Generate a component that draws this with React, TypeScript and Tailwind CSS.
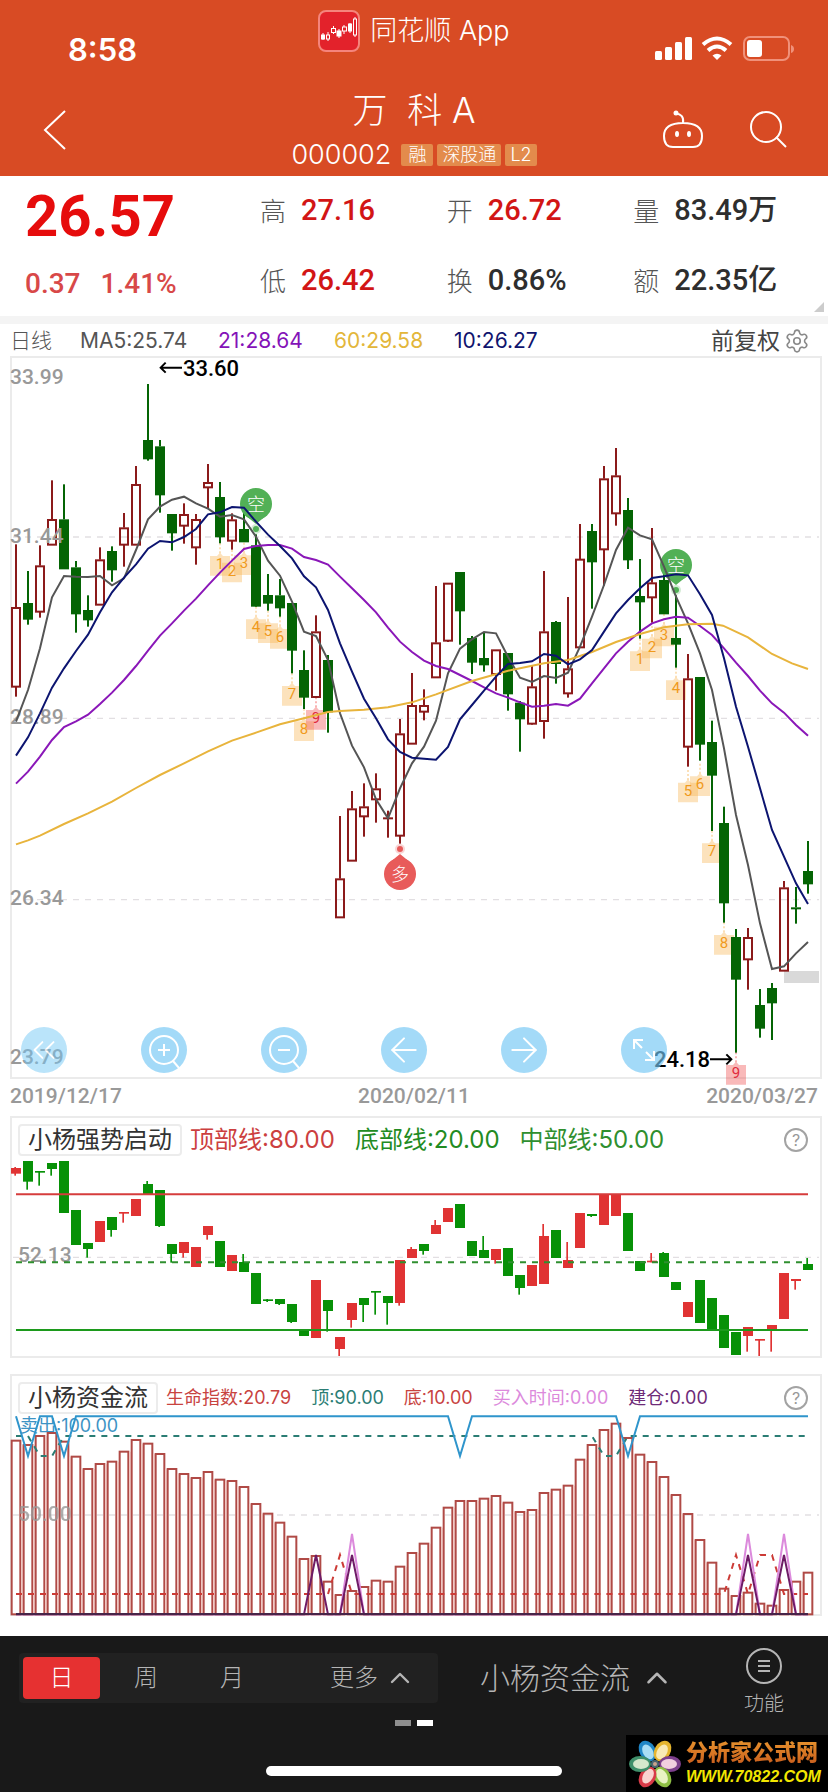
import type { ReactNode } from 'react'
import { ArrowLeft, ArrowRight, ChevronUp, ChevronsLeft, Settings } from 'lucide-react'
import clsx from 'clsx'

// ─── Series ───────────────────────────────────────────────────────────────────
// All series live on a fine grid: 3 units per panel pixel, 36 units per bar.

type Side = 'r' | 'g'
type Bar = [side: Side, high: number, top: number, bottom: number, low: number]
type Point = [x: number, y: number]

const barX = (i: number) => 48 + i * 36

const DAILY: Bar[] = [
  ['r', 583, 772, 1010, 1040], ['g', 663, 759, 807, 824], ['r', 586, 647, 785, 803], ['r', 391, 508, 584, 584],
  ['g', 403, 508, 656, 656], ['g', 633, 652, 791, 848], ['g', 736, 780, 809, 830], ['r', 592, 629, 764, 764],
  ['g', 589, 603, 659, 695], ['r', 489, 533, 584, 650], ['r', 348, 403, 584, 584], ['g', 102, 270, 326, 332],
  ['g', 270, 289, 434, 488], ['g', 492, 492, 548, 602], ['r', 460, 493, 527, 581], ['r', 492, 508, 592, 644],
  ['r', 342, 397, 412, 475], ['g', 396, 441, 560, 580], ['r', 490, 509, 572, 599], ['g', 487, 537, 575, 575],
  ['g', 553, 586, 768, 770], ['g', 672, 735, 759, 782], ['g', 687, 736, 773, 800], ['g', 759, 759, 900, 970],
  ['g', 901, 960, 1041, 1077], ['r', 796, 845, 1041, 1041], ['g', 915, 930, 1085, 1148], ['r', 1398, 1586, 1702, 1702],
  ['r', 1323, 1376, 1532, 1532], ['r', 1300, 1370, 1399, 1460], ['r', 1270, 1316, 1348, 1418], ['r', 1382, 1402, 1406, 1463],
  ['r', 1107, 1151, 1457, 1481], ['r', 969, 1066, 1181, 1181], ['r', 1018, 1066, 1085, 1111], ['r', 708, 878, 982, 982],
  ['r', 699, 699, 872, 876], ['g', 666, 666, 782, 884], ['g', 858, 864, 936, 972], ['g', 848, 924, 944, 965],
  ['r', 899, 899, 972, 1022], ['g', 909, 909, 1031, 1082], ['g', 1053, 1058, 1106, 1205], ['r', 947, 1010, 1121, 1124],
  ['r', 663, 845, 1113, 1166], ['g', 813, 816, 940, 1001], ['r', 741, 956, 1030, 1043], ['r', 522, 627, 892, 892],
  ['g', 522, 543, 635, 776], ['r', 348, 386, 598, 707], ['r', 294, 377, 490, 527], ['g', 444, 480, 629, 657],
  ['g', 627, 738, 755, 866], ['r', 534, 698, 742, 818], ['g', 660, 690, 791, 791], ['g', 736, 864, 882, 953],
  ['r', 912, 986, 1190, 1250], ['g', 981, 981, 1182, 1232], ['g', 1112, 1176, 1275, 1443], ['g', 1370, 1419, 1658, 1718],
  ['g', 1737, 1761, 1887, 2108], ['r', 1734, 1762, 1828, 1919], ['g', 1917, 1965, 2034, 2063], ['g', 1899, 1914, 1958, 2070],
  ['r', 1593, 1613, 1862, 1862], ['g', 1611, 1672, 1676, 1721], ['g', 1473, 1563, 1601, 1631],
]

const MA5 = [
  1115, 1020, 895, 742, 678, 680, 681, 678, 706, 685, 600, 508, 470, 449, 440, 460, 476, 500, 495, 508, 560, 632, 677, 755,
  845, 858, 930, 1090, 1187, 1252, 1348, 1405, 1315, 1240, 1190, 1112, 970, 896, 868, 846, 850, 920, 983, 996, 978, 984, 968,
  890, 800, 705, 600, 533, 556, 568, 650, 740, 820, 910, 1020, 1195, 1395, 1545, 1720, 1857, 1849, 1810, 1776,
]
const MA10 = [
  1217, 1162, 1090, 1013, 955, 903, 854, 787, 727, 683, 643, 596, 573, 577, 561, 537, 493, 487, 471, 473, 515, 554, 588, 625,
  679, 712, 780, 880, 965, 1046, 1105, 1168, 1206, 1223, 1226, 1229, 1191, 1108, 1065, 1022, 980, 942, 939, 934, 912, 917,
  943, 928, 900, 845, 790, 750, 715, 684, 679, 673, 676, 733, 795, 925, 1070, 1190, 1315, 1440, 1520, 1600, 1662,
]
const MA21 = [
  1301, 1265, 1220, 1170, 1131, 1114, 1094, 1062, 1028, 990, 948, 902, 857, 820, 782, 746, 706, 668, 632, 597, 588, 585, 585,
  596, 621, 630, 644, 680, 715, 750, 787, 833, 875, 906, 932, 948, 957, 975, 993, 1012, 1030, 1043, 1057, 1070, 1067, 1062,
  1067, 1046, 1000, 955, 910, 875, 845, 820, 808, 800, 803, 828, 855, 895, 938, 978, 1022, 1060, 1088, 1125, 1157,
]
const MA60: Point[] = [
  [48, 1483], [84, 1471], [120, 1457], [192, 1422], [264, 1390], [336, 1355], [408, 1314], [480, 1275], [552, 1240],
  [624, 1204], [696, 1172], [768, 1148], [840, 1123], [912, 1105], [984, 1086], [1020, 1083], [1092, 1079], [1164, 1072],
  [1236, 1057], [1308, 1033], [1416, 993], [1524, 962], [1632, 940], [1704, 930], [1776, 906], [1848, 876], [1920, 852],
  [1992, 832], [2064, 823], [2136, 821], [2169, 827], [2244, 862], [2316, 912], [2376, 940], [2424, 957],
]

// Sequence counters hanging below the bars: bar index, box top, digit
const COUNTERS: [bar: number, top: number, digit: number][] = [
  [17, 618, 1], [18, 638, 2], [19, 616, 3], [20, 808, 4], [21, 820, 5], [22, 837, 6], [23, 1008, 7], [24, 1114, 8], [25, 1080, 9],
  [52, 904, 1], [53, 866, 2], [54, 830, 3], [55, 991, 4], [56, 1298, 5], [57, 1279, 6], [58, 1480, 7], [59, 1755, 8], [60, 2145, 9],
]

const STRENGTH: Bar[] = [
  ['r', 201, 204, 221, 227], ['g', 183, 183, 245, 269], ['g', 213, 213, 218, 257], ['g', 189, 189, 207, 227],
  ['g', 183, 183, 339, 339], ['g', 330, 330, 435, 435], ['g', 429, 429, 447, 473], ['r', 363, 363, 426, 426],
  ['g', 351, 351, 390, 410], ['r', 336, 336, 341, 368], ['r', 297, 297, 348, 348], ['g', 243, 252, 282, 282],
  ['g', 270, 270, 378, 381], ['g', 432, 432, 462, 488], ['r', 426, 426, 459, 473], ['r', 441, 441, 501, 501],
  ['r', 378, 378, 405, 419], ['g', 423, 423, 501, 501], ['r', 465, 465, 513, 513], ['g', 462, 486, 516, 516],
  ['g', 519, 519, 612, 612], ['g', 597, 598, 603, 606], ['g', 597, 597, 612, 615], ['g', 612, 612, 666, 669],
  ['g', 693, 693, 708, 708], ['r', 540, 540, 714, 714], ['g', 600, 600, 633, 695], ['r', 711, 711, 747, 768],
  ['r', 609, 609, 660, 683], ['g', 594, 594, 615, 666], ['g', 573, 573, 578, 644], ['g', 588, 588, 609, 674],
  ['r', 480, 480, 609, 617], ['r', 441, 447, 474, 474], ['g', 432, 432, 453, 464], ['r', 360, 375, 402, 402],
  ['r', 324, 324, 366, 366], ['g', 312, 312, 384, 384], ['g', 423, 423, 468, 468], ['g', 408, 450, 474, 474],
  ['r', 447, 447, 480, 491], ['g', 444, 444, 528, 528], ['g', 525, 525, 564, 584], ['r', 495, 495, 558, 558],
  ['r', 372, 408, 552, 552], ['g', 390, 390, 474, 474], ['r', 426, 480, 504, 504], ['r', 339, 339, 444, 444],
  ['g', 342, 342, 348, 351], ['r', 283, 283, 375, 375], ['r', 283, 283, 348, 348], ['g', 339, 339, 453, 453],
  ['g', 483, 483, 513, 513], ['r', 459, 482, 487, 487], ['g', 456, 459, 531, 531], ['g', 546, 546, 570, 570],
  ['r', 606, 606, 651, 651], ['g', 540, 540, 669, 669], ['g', 594, 594, 690, 690], ['g', 645, 645, 744, 744],
  ['g', 696, 696, 765, 765], ['r', 681, 681, 708, 755], ['r', 717, 717, 722, 768], ['r', 675, 675, 690, 755],
  ['r', 519, 519, 657, 657], ['r', 537, 537, 543, 569], ['g', 474, 492, 510, 510],
]

const FLOW = [
  242, 255, 228, 219, 245, 290, 327, 312, 305, 275, 240, 251, 282, 327, 342, 354, 336, 359, 363, 381, 432, 461, 488, 530, 597,
  588, 665, 705, 693, 681, 662, 665, 620, 579, 551, 503, 443, 423, 423, 416, 408, 428, 456, 450, 399, 389, 377, 299, 255, 210,
  191, 234, 284, 306, 351, 405, 462, 540, 608, 686, 708, 698, 731, 737, 690, 665, 638,
]

const FLOW_BASE = 763

// Flat line that jumps to `peak` at the given bars
function spikes(base: number, peak: number, bars: number[]): string {
  return Array.from({ length: 67 }, (_, i) => `${barX(i)},${bars.includes(i) ? peak : base}`).join(' ')
}

const bySeries = (values: number[]) => values.map((v, i) => `${barX(i)},${v}`).join(' ')

// ─── Shared pieces ────────────────────────────────────────────────────────────

const AXIS = 'fill-[#999999] font-[Roboto] text-[21px] font-medium'

interface PanelProps {
  viewBox: string
  chart: ReactNode
  label: string
  children?: ReactNode
}

function Panel({ viewBox, chart, label, children }: PanelProps) {
  return (
    <section className="relative ml-2.5 mr-1.5 grid border-2 border-[#ebebeb]">
      <svg viewBox={viewBox} className="col-start-1 row-start-1 h-auto w-full overflow-visible" role="img" aria-label={label}>
        {chart}
      </svg>
      {children}
    </section>
  )
}

function Fine({ children }: { children: ReactNode }) {
  return <g transform="scale(0.333333)">{children}</g>
}

function GridLine({ y }: { y: number }) {
  return <line x1="39" x2="2457" y1={y} y2={y} stroke="#e2dfe2" strokeWidth="4" strokeDasharray="18 18" />
}

function Candle({ bar, i }: { bar: Bar; i: number }) {
  const [side, high, top, bottom, low] = bar
  const x = barX(i)
  const color = side === 'r' ? '#8b1a1a' : '#046404'
  return (
    <g stroke={color} strokeWidth="6">
      {high < top && <line x1={x} x2={x} y1={high} y2={top} />}
      {low > bottom && <line x1={x} x2={x} y1={bottom} y2={low} />}
      {side === 'r' && bottom - top > 6
        ? <rect x={x - 12} y={top + 2} width="24" height={bottom - top - 2} fill="none" />
        : <rect x={x - 15} y={top} width="30" height={bottom - top + 2} fill={color} stroke="none" />}
    </g>
  )
}

function Signal({ x, y, text, up }: { x: number; y: number; text: string; up?: boolean }) {
  const color = up ? '#e85b5a' : '#52b056'
  const d = up ? -1 : 1
  return (
    <g>
      <circle cx={x} cy={y} r="16" fill={color} />
      <path d={`M${x - 11} ${y + d * 11} L${x} ${y + d * 20} L${x + 11} ${y + d * 11}Z`} fill={color} />
      <circle cx={x} cy={y + d * 25} r="5" fill={color} fillOpacity="0.25" />
      <circle cx={x} cy={y + d * 25} r="3" fill={color} />
      <text x={x} y={y + 7} textAnchor="middle" className="fill-white text-[18px] font-light">{text}</text>
    </g>
  )
}

function HelpButton() {
  return (
    <button
      type="button"
      className="ml-auto flex size-6 shrink-0 items-center justify-center rounded-full border-2 border-[#a3a3a3] text-base leading-none text-[#999999]"
      aria-label="帮助"
    >
      ?
    </button>
  )
}

// ─── Header ───────────────────────────────────────────────────────────────────

function AppIcon() {
  return (
    <svg viewBox="0 0 42 42" className="size-[42px]" aria-hidden="true">
      <rect x="1" y="1" width="40" height="40" rx="7" fill="#e3222b" stroke="#f5847c" strokeWidth="2" />
      <g stroke="#fff" strokeWidth="1" fill="none">
        <path d="M5 23v7M10 22v9M15.500 16v8M21 19v9M26 15v9M32 13v10M37 7v20" />
        <rect x="3.500" y="25" width="3" height="4" fill="#fff" />
        <rect x="8.500" y="25" width="3" height="4" fill="#e3222b" />
        <rect x="13.500" y="18.500" width="4" height="4" fill="#e3222b" />
        <rect x="19" y="21" width="4" height="5" fill="#fff" />
        <rect x="24.500" y="17" width="4" height="4" fill="#e3222b" />
        <rect x="30.500" y="14" width="3" height="7" fill="#fff" />
        <rect x="35.500" y="9" width="3" height="16" fill="#e3222b" />
      </g>
    </svg>
  )
}

function StatusIcons() {
  return (
    <svg viewBox="0 0 142 26" className="h-[26px] w-[142px]" aria-hidden="true">
      <g fill="#fff">
        <rect x="1" y="15" width="7" height="9" rx="1.500" />
        <rect x="11" y="11" width="7" height="13" rx="1.500" />
        <rect x="21" y="6" width="7" height="18" rx="1.500" />
        <rect x="31" y="1" width="7" height="23" rx="1.500" />
        <path d="M58.500 19.500q4.500-3.500 9 0L63 24z" />
      </g>
      <g fill="none" stroke="#fff" strokeWidth="4">
        <path d="M49 8.500q14-12 28 0" />
        <path d="M54 14.500q9-8 18 0" />
      </g>
      <rect x="90" y="1" width="45" height="23" rx="6" fill="none" stroke="#f0917a" strokeWidth="2" />
      <path d="M137 9q3 1 3 4t-3 4z" fill="#f0917a" />
      <rect x="93" y="4" width="15" height="17" rx="3" fill="#fff" />
    </svg>
  )
}

const TAG = 'rounded-xs bg-[#e38b4c] text-[18px] font-light leading-[22px]'

function Header() {
  return (
    <header className="bg-[#d84b24] text-white">
      <div className="grid h-[82px] grid-cols-[1fr_auto_1fr] items-start">
        <time className="pl-[68px] pt-[30px] text-[31px] font-semibold leading-10">8:58</time>
        <div className="flex items-center gap-2.5 pt-2.5">
          <AppIcon />
          <span className="text-[27px] font-light leading-10">同花顺 App</span>
        </div>
        <div className="flex justify-end pr-8 pt-9">
          <StatusIcons />
        </div>
      </div>
      <div className="grid h-[94px] grid-cols-[1fr_auto_1fr] items-center">
        <button type="button" className="ml-6 w-16" aria-label="返回">
          <svg viewBox="0 0 64 44" className="h-11 w-16 fill-none stroke-white" strokeWidth="2" aria-hidden="true">
            <path d="M41 4L21 23L41 42" />
          </svg>
        </button>
        <div className="flex flex-col items-center self-start">
          <h1 className="text-[35px] font-light leading-[56px]">万&nbsp; 科 A</h1>
          <p className="flex items-center gap-1">
            <span className="mr-1.5 text-[27px] font-light leading-[34px]">000002</span>
            <span className={clsx(TAG, 'px-[7px]')}>融</span>
            <span className={clsx(TAG, 'px-[5px]')}>深股通</span>
            <span className={clsx(TAG, 'px-[5px]')}>L2</span>
          </p>
        </div>
        <div className="flex items-center justify-end gap-11 pr-10">
          <button type="button" aria-label="智能助手">
            <svg viewBox="0 0 42 38" className="h-[38px] w-[42px] fill-none stroke-white" strokeWidth="2" aria-hidden="true">
              <path d="M21 13C10 13 2 16 2 26c0 8 3 11 9 11h20c6 0 9-3 9-11 0-10-8-13-19-13zM21 13c1-6-2-9-7-9.500" />
              <circle cx="14" cy="3" r="2.500" fill="#fff" stroke="none" />
              <ellipse cx="15" cy="24" rx="2" ry="3" fill="#fff" stroke="none" />
              <ellipse cx="27" cy="24" rx="2" ry="3" fill="#fff" stroke="none" />
            </svg>
          </button>
          <button type="button" aria-label="搜索">
            <svg viewBox="0 0 40 40" className="size-10 fill-none stroke-white" strokeWidth="2" aria-hidden="true">
              <circle cx="18" cy="18" r="15" />
              <path d="M28 28L38 38" />
            </svg>
          </button>
        </div>
      </div>
    </header>
  )
}

// ─── Quote ────────────────────────────────────────────────────────────────────

const STATS: [label: string, value: string, red: boolean][] = [
  ['高', '27.16', true], ['开', '26.72', true], ['量', '83.49万', false],
  ['低', '26.42', true], ['换', '0.86%', false], ['额', '22.35亿', false],
]

function Quote() {
  return (
    <section className="relative flex h-[140px] pl-[25px] pr-2">
      <div className="w-[235px] shrink-0">
        <p className="pt-2 font-[Roboto] text-[58px] font-bold leading-[64px] text-[#e60c0c]">26.57</p>
        <p className="flex gap-5 pt-4 font-[Roboto] text-[28px] font-medium leading-10 text-[#d84848]">
          <span>0.37</span>
          <span>1.41%</span>
        </p>
      </div>
      <dl className="grid flex-1 grid-cols-3">
        {STATS.map(([label, value, red]) => (
          <div key={label} className="flex items-center gap-[15px]">
            <dt className="text-[26px] font-light text-[#555555]">{label}</dt>
            <dd className={clsx('font-[Roboto,"Noto_Sans_CJK_SC"] text-[29px] font-medium', red ? 'text-[#d21515]' : 'text-[#2e2e2e]')}>
              {value}
            </dd>
          </div>
        ))}
      </dl>
      <svg viewBox="0 0 10 10" className="absolute bottom-1 right-1 size-2.5" aria-hidden="true">
        <path d="M10 0V10H0Z" fill="#cccccc" />
      </svg>
    </section>
  )
}

function Legend() {
  return (
    <div className="flex h-8 items-center pl-2.5 pr-[18px] pt-0.5 text-[21px] text-[#555555]">
      <span className="w-[70px] font-light">日线</span>
      <span className="w-[138px]">MA5:25.74</span>
      <span className="w-[116px] text-[#8413b8]">21:28.64</span>
      <span className="w-[120px] text-[#e3b63a]">60:29.58</span>
      <span className="text-[#10146e]">10:26.27</span>
      <button type="button" className="ml-auto flex items-center gap-1 text-[23px] text-[#444444]">
        前复权
        <Settings size={26} strokeWidth={1.5} className="text-[#8a8a8a]" aria-hidden="true" />
      </button>
    </div>
  )
}

// ─── Daily chart ──────────────────────────────────────────────────────────────

function DailyChart() {
  return (
    <>
      <Fine>
        <GridLine y={561} />
        <GridLine y={1105} />
        <GridLine y={1649} />
        {COUNTERS.map(([bar, top, digit]) => {
          const x = barX(bar)
          const color = digit === 9 ? '#f04848' : '#f7b24f'
          return (
            <g key={`${bar}`}>
              <line x1={x} x2={x} y1={top - 38} y2={top - 8} stroke={color} strokeOpacity="0.6" strokeWidth="4" strokeDasharray="6 6" />
              <path d={`M${x - 30} ${top}H${x - 9}L${x} ${top - 10}L${x + 9} ${top}H${x + 30}V${top + 59}H${x - 30}Z`} fill={color} fillOpacity="0.38" />
            </g>
          )
        })}
      </Fine>
      {COUNTERS.map(([bar, top, digit]) => (
        <text
          key={`${bar}`}
          x={barX(bar) / 3}
          y={top / 3 + 13}
          textAnchor="middle"
          className={clsx('font-[Roboto] text-[15px]', digit === 9 ? 'fill-[#e02b3c]' : 'fill-[#f09a1c]')}
        >
          {digit}
        </text>
      ))}
      <Fine>
        <rect x="2352" y="1863" width="105" height="36" fill="#d9d9d9" />
        {DAILY.map((bar, i) => <Candle key={i} bar={bar} i={i} />)}
      </Fine>
      <text x="10" y="34" className={AXIS}>33.99</text>
      <text x="10" y="193" className={AXIS}>31.44</text>
      <text x="10" y="374" className={AXIS}>28.89</text>
      <text x="10" y="555" className={AXIS}>26.34</text>
      <text x="10" y="714" className={AXIS}>23.79</text>
      <Signal x={256} y={154} text="空" />
      <Signal x={676} y={215} text="空" />
      <Signal x={400} y={524} text="多" up />
      <Fine>
        <g fill="none" strokeWidth="6">
          <polyline points={bySeries(MA5)} stroke="#555555" />
          <polyline points={bySeries(MA21)} stroke="#8a17b8" />
          <polyline points={MA60.join(' ')} stroke="#e8b43c" />
          <polyline points={bySeries(MA10)} stroke="#0c1470" />
        </g>
        <g fill="none" stroke="#000" strokeWidth="6">
          <path d="M546 53H482M497 38L482 53L497 68" />
          <path d="M2130 2128H2194M2179 2113L2194 2128L2179 2143" />
        </g>
      </Fine>
      <text x="183" y="26" className="fill-black font-[Roboto] text-[22px] font-medium">33.60</text>
      <text x="654" y="717" className="fill-black font-[Roboto] text-[22px] font-medium">24.18</text>
    </>
  )
}

const TOOL = 'flex size-[46px] items-center justify-center rounded-full bg-[#72c6f5]/65 text-white'

function ZoomGlyph({ plus }: { plus?: boolean }) {
  return (
    <svg viewBox="0 0 36 36" className="size-9 fill-none stroke-white" strokeWidth="2" aria-hidden="true">
      <circle cx="18" cy="18" r="14" />
      <path d="M27 29L33 36M12 18H24" />
      {plus && <path d="M18 12V24" />}
    </svg>
  )
}

function ChartTools() {
  return (
    <div className="absolute bottom-1 left-[9px] flex gap-[74px]">
      <button type="button" className={clsx(TOOL, 'opacity-75')} aria-label="最早">
        <ChevronsLeft size={38} strokeWidth={1.2} />
      </button>
      <button type="button" className={TOOL} aria-label="放大"><ZoomGlyph plus /></button>
      <button type="button" className={TOOL} aria-label="缩小"><ZoomGlyph /></button>
      <button type="button" className={TOOL} aria-label="左移"><ArrowLeft size={40} strokeWidth={1.2} /></button>
      <button type="button" className={TOOL} aria-label="右移"><ArrowRight size={40} strokeWidth={1.2} /></button>
      <button type="button" className={TOOL} aria-label="全屏">
        <svg viewBox="0 0 24 24" className="size-6 fill-none stroke-white" strokeWidth="2" aria-hidden="true">
          <path d="M10 10L2 2M2 11V2H11M14 14L22 22M13 22H22V13" />
        </svg>
      </button>
    </div>
  )
}

// ─── Indicator charts ─────────────────────────────────────────────────────────

function StrengthChart() {
  return (
    <>
      <Fine><GridLine y={472} /></Fine>
      <text x="18" y="162" className={AXIS}>52.13</text>
      <Fine>
        {STRENGTH.map(([side, high, top, bottom, low], i) => {
          const x = barX(i)
          const color = side === 'r' ? '#e03333' : '#079107'
          return (
            <g key={i} fill={color}>
              {low > high && <rect x={x - 5} y={high} width="5" height={low - high} />}
              <rect x={x - 15} y={top} width="30" height={bottom - top} />
            </g>
          )
        })}
        <g strokeWidth="6">
          <line x1="48" x2="2424" y1="283" y2="283" stroke="#d63c3c" />
          <line x1="48" x2="2424" y1="487" y2="487" stroke="#2f8f2f" strokeDasharray="18 18" />
          <line x1="48" x2="2424" y1="690" y2="690" stroke="#1c9a1c" />
        </g>
      </Fine>
    </>
  )
}

function FlowChart() {
  return (
    <>
      <Fine><GridLine y={465} /></Fine>
      <text x="20" y="72" className="fill-[#3d93c4] text-[18px]">卖出:100.00</text>
      <Fine>
        <g fill="none" stroke="#b04a46" strokeWidth="6">
          {FLOW.map((top, i) => (
            <g key={i}>
              <rect x={barX(i) - 13} y={top} width="26" height={FLOW_BASE - top} />
              <line x1={barX(i) + 18} x2={barX(i) + 18} y1={Math.max(top, FLOW[i + 1] ?? FLOW_BASE)} y2={FLOW_BASE} stroke="#f6c9c5" strokeWidth="4" />
            </g>
          ))}
        </g>
      </Fine>
      <text x="18" y="161" className={clsx(AXIS, 'opacity-80')}>50.00</text>
      <Fine>
        <g fill="none" strokeWidth="6">
          <polyline points={spikes(228, 288, [2, 3, 49, 50])} stroke="#2b7d74" strokeDasharray="18 18" />
          <polyline points={spikes(702, 585, [27, 60, 62, 63])} stroke="#cc3b36" strokeDasharray="18 18" />
          <polyline points={spikes(169, 288, [1, 4, 37, 51])} stroke="#2f95cc" />
          <polyline points={spikes(FLOW_BASE, 522, [28, 61, 64])} stroke="#dc8adc" />
          <polyline points={spikes(FLOW_BASE, 585, [25, 28, 61, 64])} stroke="#6e1b66" />
          <line x1="48" x2="2424" y1={FLOW_BASE - 1} y2={FLOW_BASE - 1} stroke="#472448" />
        </g>
      </Fine>
    </>
  )
}

const INDICATOR_NAME = 'rounded-sm border-2 border-[#ececec] bg-white px-2 text-[24px] leading-7 text-[#333333]'

// ─── Bottom bar ───────────────────────────────────────────────────────────────

const PETALS = [
  { angle: -30, ring: '#1f86c6', core: '#a8def5' },
  { angle: 30, ring: '#e5b52e', core: '#f8eab5' },
  { angle: 90, ring: '#7d3f8c', core: '#f2cfe0' },
  { angle: 150, ring: '#8fbf45', core: '#e9f3c4' },
  { angle: 210, ring: '#d83a48', core: '#f9d3d0' },
  { angle: 270, ring: '#3f8f6a', core: '#d6e8cc' },
]

function Watermark() {
  return (
    <div className="absolute bottom-0 right-0 flex h-[57px] w-[202px] items-center gap-1 bg-black pl-0.5">
      <svg viewBox="-27 -27 54 54" className="size-[54px] shrink-0" aria-hidden="true">
        {PETALS.map(({ angle, ring, core }) => (
          <g key={angle} transform={`rotate(${angle})`}>
            <ellipse cy="-15" rx="8" ry="11" fill={ring} />
            <ellipse cy="-14" rx="5" ry="8" fill={core} />
          </g>
        ))}
        <circle r="4" fill="#4a6670" />
        <circle r="2" fill="#c9a38c" />
      </svg>
      <p className="whitespace-nowrap">
        <span className="block bg-linear-to-b from-[#e8952e] to-[#c75a1c] bg-clip-text text-[22px] font-black leading-[27px] text-transparent">
          分析家公式网
        </span>
        <a href="#site" className='block font-["Liberation_Sans"] text-base font-bold italic leading-[22px] text-[#f2e600]'>
          WWW.70822.COM
        </a>
      </p>
    </div>
  )
}

function BottomBar() {
  return (
    <footer className="relative mt-5 h-[156px] bg-[#191919] text-[#b5b5b5]">
      <nav className="flex h-[84px] items-center pl-[19px] pr-[44px] text-[24px] font-light">
        <div className="flex h-[50px] w-[419px] items-center rounded-sm bg-[#212121] pl-1">
          <button type="button" className="h-[42px] w-[77px] rounded-sm bg-[#e63131] text-white" aria-pressed="true">日</button>
          <button type="button" className="h-[42px] w-[92px]">周</button>
          <button type="button" className="h-[42px] w-20">月</button>
          <button type="button" className="ml-auto flex items-center gap-1.5 pr-[22px]">
            更多
            <ChevronUp size={32} strokeWidth={1.8} aria-hidden="true" />
          </button>
        </div>
        <button type="button" className="ml-[42px] flex items-center gap-2.5 text-[30px]">
          小杨资金流
          <ChevronUp size={34} strokeWidth={1.8} aria-hidden="true" />
        </button>
        <button type="button" className="ml-auto flex flex-col items-center gap-1.5 pt-2.5 text-[20px] leading-7">
          <svg viewBox="0 0 36 36" className="size-9 fill-none stroke-[#b5b5b5]" strokeWidth="2" aria-hidden="true">
            <circle cx="18" cy="18" r="17" />
            <path d="M12 13H24M12 18H24M12 23H24" />
          </svg>
          功能
        </button>
      </nav>
      <div className="flex justify-center gap-1.5">
        <span className="h-1.5 w-4 bg-[#8f8f8f]" />
        <span className="h-1.5 w-4 bg-white" />
      </div>
      <div className="mx-auto mt-10 h-2.5 w-[296px] rounded-full bg-white" />
      <Watermark />
    </footer>
  )
}

// ─── Page ─────────────────────────────────────────────────────────────────────

export default function App() {
  return (
    <main className='w-full bg-white font-[Inter,"Noto_Sans_CJK_SC",sans-serif]'>
      <Header />
      <Quote />
      <div className="h-2 bg-[#f4f4f4]" />
      <Legend />

      <Panel viewBox="12 8 808 719" label="日线" chart={<DailyChart />}>
        <ChartTools />
      </Panel>
      <div className="flex h-[37px] items-center justify-between px-2.5 pb-0.5 font-[Roboto] text-[21px] font-medium text-[#999999]">
        <span>2019/12/17</span>
        <span>2020/02/11</span>
        <span>2020/03/27</span>
      </div>

      <Panel viewBox="12 18 808 238" label="小杨强势启动" chart={<StrengthChart />}>
        <div className="z-10 col-start-1 row-start-1 flex items-center self-start pl-1.5 pr-3 pt-1.5 text-[24px] leading-8">
          <button type="button" className={INDICATOR_NAME}>小杨强势启动</button>
          <span className="ml-2 text-[#cc3f3f]">顶部线:80.00</span>
          <span className="ml-5 text-[#228b22]">底部线:20.00</span>
          <span className="ml-5 text-[#2f8f2f]">中部线:50.00</span>
          <HelpButton />
        </div>
      </Panel>

      <div className="h-4" />
      <Panel viewBox="12 16 808 238" label="小杨资金流" chart={<FlowChart />}>
        <div className="z-10 col-start-1 row-start-1 flex items-center self-start pl-1.5 pr-3 pt-1.5 text-[18px] leading-8">
          <button type="button" className={INDICATOR_NAME}>小杨资金流</button>
          <span className="ml-2 text-[#c8433f]">生命指数:20.79</span>
          <span className="ml-5 text-[#2b7d74]">顶:90.00</span>
          <span className="ml-5 text-[#c8433f]">底:10.00</span>
          <span className="ml-5 text-[#dc8adc]">买入时间:0.00</span>
          <span className="ml-5 text-[#6e2b78]">建仓:0.00</span>
          <HelpButton />
        </div>
      </Panel>

      <BottomBar />
    </main>
  )
}
